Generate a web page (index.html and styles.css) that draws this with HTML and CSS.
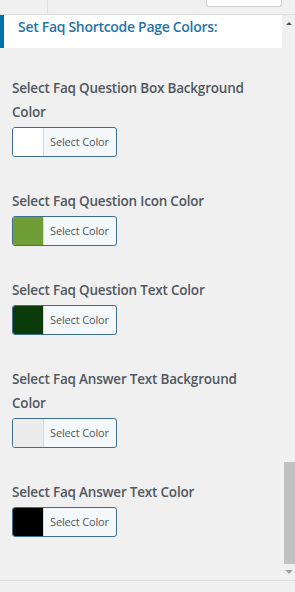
FILE: index.html
```html
<!DOCTYPE html>
<html lang="en">
<head>
  <meta charset="UTF-8">
  <title>Faq Shortcode Colors</title>
  <link rel="stylesheet" href="styles.css">
</head>
<body>
  <!-- top strip from the admin screen above -->
  <div class="topbar">
    <div class="tab-edge"></div>
    <div class="top-box"></div>
  </div>

  <div class="frame">
    <div class="pane">
      <h2 class="section-title">Set Faq Shortcode Page Colors:</h2>

      <div class="field">
        <label class="field-label">Select Faq Question Box Background Color</label>
        <button type="button" class="color-btn"><span class="swatch swatch-white"></span><span class="btn-text">Select Color</span></button>
      </div>

      <div class="field">
        <label class="field-label">Select Faq Question Icon Color</label>
        <button type="button" class="color-btn"><span class="swatch swatch-green"></span><span class="btn-text">Select Color</span></button>
      </div>

      <div class="field">
        <label class="field-label">Select Faq Question Text Color</label>
        <button type="button" class="color-btn"><span class="swatch swatch-darkgreen"></span><span class="btn-text">Select Color</span></button>
      </div>

      <div class="field">
        <label class="field-label">Select Faq Answer Text Background Color</label>
        <button type="button" class="color-btn"><span class="swatch swatch-grey"></span><span class="btn-text">Select Color</span></button>
      </div>

      <div class="field">
        <label class="field-label">Select Faq Answer Text Color</label>
        <button type="button" class="color-btn"><span class="swatch swatch-black"></span><span class="btn-text">Select Color</span></button>
      </div>
    </div>

    <!-- scrollbar of the panel -->
    <div class="scrollbar">
      <div class="sb-arrow"><span class="arrow-up"></span></div>
      <div class="sb-track"><div class="sb-thumb"></div></div>
      <div class="sb-arrow sb-arrow-down"><span class="arrow-down"></span></div>
    </div>
  </div>

  <div class="footer"></div>
</body>
</html>
```

FILE: styles.css
```css
body {
  margin: 0;
  background: #f0f0f1;
  font-family: 'Open Sans', sans-serif;
  width: 295px;
  height: 592px;
  overflow: hidden;
}
.topbar {
  display: flex;
  height: 14px;
  border-bottom: 1px solid #dcdcde;
}
.tab-edge {
  width: 47px;
  border-right: 1px solid #e0e0e0;
}
.top-box {
  margin-left: 158px;
  width: 74px;
  height: 6px;
  background: #fff;
  border: 1px solid #d0d0d3;
  border-top: none;
  border-radius: 0 0 3px 3px;
}
.frame {
  display: flex;
  height: 565px;
  border-bottom: 1px solid #dcdcde;
}
.pane {
  flex: 1;
}
.section-title {
  margin: 0 1px 0 0;
  background: #fff;
  border-left: 4px solid #0073aa;
  padding: 2px 0 11px 14px;
  font-size: 14px;
  line-height: 20px;
  letter-spacing: -0.3px;
  font-weight: 600;
  color: #1f74a8;
}
.field {
  padding: 0 20px 0 12px;
  margin-top: 28px;
}
.field + .field {
  margin-top: 32px;
}
.field-label {
  display: block;
  font-size: 13.5px;
  line-height: 24px;
  letter-spacing: -0.2px;
  font-weight: 600;
  color: #50575e;
}
.color-btn {
  display: flex;
  margin-top: 3px;
  padding: 0;
  height: 30px;
  border: 1px solid #3e6d8e;
  border-radius: 3px;
  background: #f5f8fa;
  overflow: hidden;
  font-family: inherit;
  cursor: pointer;
}
.swatch {
  width: 30px;
  height: 100%;
  border-right: 1px solid #d5d8db;
}
.swatch-white { background: #ffffff; }
.swatch-green { background: #719d36; }
.swatch-darkgreen { background: #0a3b08; }
.swatch-grey { background: #ececec; }
.swatch-black { background: #000000; }
.btn-text {
  padding: 0 7px 0 6px;
  font-size: 11px;
  line-height: 28px;
  letter-spacing: -0.15px;
  color: #50575e;
}
.scrollbar {
  width: 12px;
  display: flex;
  flex-direction: column;
}
.sb-arrow {
  height: 17px;
  display: flex;
  justify-content: center;
  align-items: center;
}
.sb-arrow-down {
  height: 16px;
}
.arrow-up {
  border-left: 3px solid transparent;
  border-right: 3px solid transparent;
  border-bottom: 3px solid #505050;
}
.arrow-down {
  border-left: 4px solid transparent;
  border-right: 4px solid transparent;
  border-top: 4px solid #a3a3a3;
}
.sb-track {
  flex: 1;
  display: flex;
  flex-direction: column;
  justify-content: flex-end;
}
.sb-thumb {
  height: 102px;
  margin-left: 1px;
  background: #c1c1c1;
}
.footer {
  height: 11px;
}
```
